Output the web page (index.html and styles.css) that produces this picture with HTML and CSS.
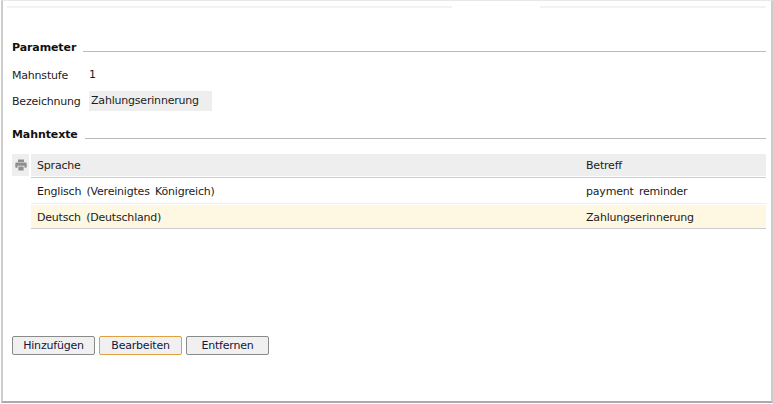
FILE: index.html
```html
<!DOCTYPE html>
<html lang="de">
<head>
    <meta charset="UTF-8">
    <meta name="viewport" content="width=device-width, initial-scale=1.0">
    <title>Mahnstufe</title>
    <link rel="stylesheet" href="styles.css">
</head>
<body>
    <div class="panel">
        <div class="tab-line">
            <div class="tab-line-left"></div>
            <div class="tab-line-gap"></div>
            <div class="tab-line-right"></div>
        </div>

        <div class="section-title section-first">
            <h2>Parameter</h2>
            <div class="section-rule"></div>
        </div>
        <div class="form-row form-row-plain">
            <label>Mahnstufe</label>
            <span class="form-value">1</span>
        </div>
        <div class="form-row">
            <label>Bezeichnung</label>
            <span class="form-value form-field">Zahlungserinnerung</span>
        </div>

        <div class="section-title">
            <h2>Mahntexte</h2>
            <div class="section-rule"></div>
        </div>
        <div class="table-wrap">
            <div class="print-cell">
                <svg width="12" height="12" viewBox="0 0 12 12">
                    <path fill="#8f8f8f" d="M3 0.5h6v2.5h-6zM1.5 3.5h9a1.2 1.2 0 0 1 1.2 1.2v3.3a0.8 0.8 0 0 1-0.8 0.8h-1.4v-2h-7v2h-1.4a0.8 0.8 0 0 1-0.8-0.8v-3.3a1.2 1.2 0 0 1 1.2-1.2zM3.4 7.4h5.2v4h-5.2z"/>
                </svg>
            </div>
            <table class="text-table">
                <thead>
                    <tr>
                        <th class="col-lang">Sprache</th>
                        <th>Betreff</th>
                    </tr>
                </thead>
                <tbody>
                    <tr>
                        <td>Englisch (Vereinigtes Königreich)</td>
                        <td>payment reminder</td>
                    </tr>
                    <tr class="selected">
                        <td>Deutsch (Deutschland)</td>
                        <td>Zahlungserinnerung</td>
                    </tr>
                </tbody>
            </table>
        </div>

        <div class="button-row">
            <button type="button" class="btn">Hinzufügen</button>
            <button type="button" class="btn btn-focus">Bearbeiten</button>
            <button type="button" class="btn">Entfernen</button>
        </div>
    </div>
</body>
</html>
```

FILE: styles.css
```css
* {
    margin: 0;
    padding: 0;
    box-sizing: border-box;
    font-family: 'DejaVu Sans', Tahoma, sans-serif;
    letter-spacing: -0.2px;
}
body {
    background-color: #fff;
    color: #1c1c1c;
    font-size: 11px;
}
.panel {
    width: 772px;
    height: 403px;
    margin-left: 1px;
    padding: 5px 5px 0 9px;
    border-top: 1px solid #e8e8e8;
    border-left: 2px solid #ccc;
    border-right: 2px solid #ccc;
    border-bottom: 2px solid #aaa;
}
.tab-line {
    display: flex;
    height: 2px;
    margin-left: -5px;
}
.tab-line-left {
    width: 445px;
    background-color: #f2f2f2;
}
.tab-line-gap {
    width: 88px;
}
.tab-line-right {
    flex: 1;
    background-color: #f2f2f2;
}
.section-title {
    display: flex;
    align-items: flex-end;
    gap: 7px;
    height: 16px;
    margin-top: 16px;
}
.section-first {
    margin-top: 32px;
}
.section-title h2 {
    font-size: 11px;
    font-weight: 700;
    line-height: 16px;
    letter-spacing: -0.1px;
    color: #111;
}
.section-rule {
    flex: 1;
    height: 1px;
    margin-bottom: 4px;
    background-color: #bbb;
}
.form-row {
    display: flex;
    align-items: center;
    height: 20px;
    margin-top: 6px;
}
.form-row-plain {
    margin-top: 9px;
}
.form-row label {
    width: 77px;
}
.form-value {
    line-height: 20px;
}
.form-field {
    width: 123px;
    padding: 0 2px;
    background-color: #eee;
}
.table-wrap {
    display: flex;
    gap: 2px;
    align-items: flex-start;
    margin-top: 11px;
}
.print-cell {
    display: flex;
    align-items: center;
    justify-content: center;
    width: 17px;
    height: 22px;
    background-color: #eee;
}
.text-table {
    flex: 1;
    border-collapse: separate;
    border-spacing: 0;
    word-spacing: 2px;
}
.text-table th,
.text-table td {
    padding: 1px 6px 0;
    font-weight: 400;
    text-align: left;
}
.text-table th {
    height: 23px;
    background-color: #eee;
    background-clip: padding-box;
    border-bottom: 1px solid #fff;
}
.text-table td {
    height: 27px;
    border-top: 1px solid #ccc;
    border-bottom: 1px solid #eee;
}
.col-lang {
    width: 549px;
}
.selected td {
    height: 25px;
    background-color: #fef7e1;
    background-clip: padding-box;
    border-top-color: #fff;
    border-bottom-color: #ccc;
}
.button-row {
    display: flex;
    gap: 4px;
    margin-top: 107px;
}
.btn {
    width: 83px;
    height: 19px;
    background-color: #f0f0f0;
    border: 1px solid #8a8a8a;
    border-radius: 2px;
    font-size: 11px;
    color: #14143c;
}
.btn-focus {
    border-color: #e0a040;
}
```
